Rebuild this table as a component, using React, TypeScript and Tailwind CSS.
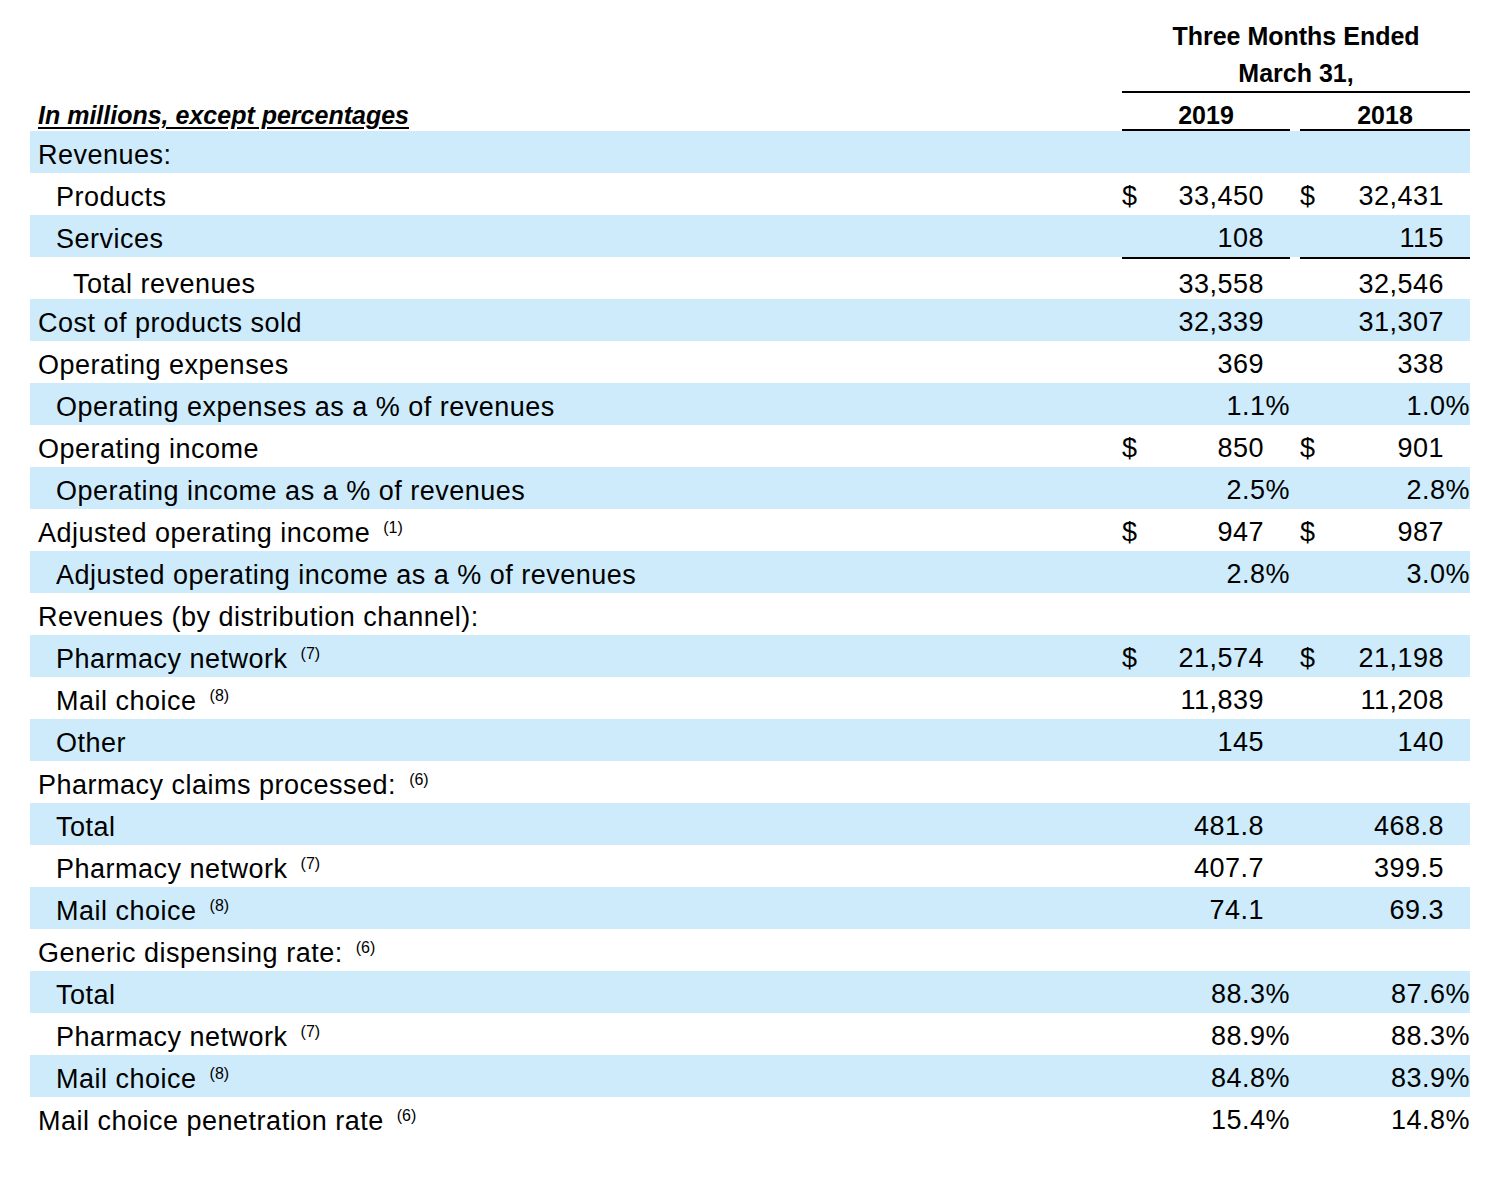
import React from 'react';

type Row = {
  label: string;
  note?: string;
  indent?: 0 | 1 | 2;
  a?: string;
  b?: string;
  dollar?: boolean;
  pct?: boolean;
  topRule?: boolean;
};

const rows: Row[] = [
  { label: 'Revenues:' },
  { label: 'Products', indent: 1, a: '33,450', b: '32,431', dollar: true },
  { label: 'Services', indent: 1, a: '108', b: '115' },
  { label: 'Total revenues', indent: 2, a: '33,558', b: '32,546', topRule: true },
  { label: 'Cost of products sold', a: '32,339', b: '31,307' },
  { label: 'Operating expenses', a: '369', b: '338' },
  { label: 'Operating expenses as a % of revenues', indent: 1, a: '1.1', b: '1.0', pct: true },
  { label: 'Operating income', a: '850', b: '901', dollar: true },
  { label: 'Operating income as a % of revenues', indent: 1, a: '2.5', b: '2.8', pct: true },
  { label: 'Adjusted operating income', note: '(1)', a: '947', b: '987', dollar: true },
  { label: 'Adjusted operating income as a % of revenues', indent: 1, a: '2.8', b: '3.0', pct: true },
  { label: 'Revenues (by distribution channel):' },
  { label: 'Pharmacy network', note: '(7)', indent: 1, a: '21,574', b: '21,198', dollar: true },
  { label: 'Mail choice', note: '(8)', indent: 1, a: '11,839', b: '11,208' },
  { label: 'Other', indent: 1, a: '145', b: '140' },
  { label: 'Pharmacy claims processed:', note: '(6)' },
  { label: 'Total', indent: 1, a: '481.8', b: '468.8' },
  { label: 'Pharmacy network', note: '(7)', indent: 1, a: '407.7', b: '399.5' },
  { label: 'Mail choice', note: '(8)', indent: 1, a: '74.1', b: '69.3' },
  { label: 'Generic dispensing rate:', note: '(6)' },
  { label: 'Total', indent: 1, a: '88.3', b: '87.6', pct: true },
  { label: 'Pharmacy network', note: '(7)', indent: 1, a: '88.9', b: '88.3', pct: true },
  { label: 'Mail choice', note: '(8)', indent: 1, a: '84.8', b: '83.9', pct: true },
  { label: 'Mail choice penetration rate', note: '(6)', a: '15.4', b: '14.8', pct: true },
];

const indentClass = ['pl-[8px]', 'pl-[26px]', 'pl-[43px]'];

const Cell = ({ value, dollar, pct, rule }: { value?: string; dollar?: boolean; pct?: boolean; rule?: boolean }) => (
  <div className={`flex h-full items-center justify-between ${rule ? 'border-t-2 border-black pt-[10px]' : 'pt-[3px]'}`}>
    <span>{dollar ? '$' : ''}</span>
    {value && (
      <span className={pct ? '' : 'pr-[26px]'}>
        {value}
        {pct ? '%' : ''}
      </span>
    )}
  </div>
);

const App: React.FC = () => {
  return (
    <div
      className="w-[1498px] h-[1180px] bg-white text-black pl-[30px] pr-[28px]"
      style={{ fontFamily: '"Liberation Sans", Arial, sans-serif' }}
    >
      {/* heading */}
      <div className="flex pt-[17px]">
        <div className="flex-1" />
        <div className="w-[348px] border-b-2 border-black pt-[1px] text-center text-[25px] font-bold leading-[37px] h-[76px]">
          <div>Three Months Ended</div>
          <div>March 31,</div>
        </div>
      </div>
      <div className="flex h-[38px] items-end text-[25px] font-bold">
        <div className="flex-1 pl-[8px] pb-[2px] italic underline underline-offset-[3px] leading-[28px]">
          In millions, except percentages
        </div>
        <div className="w-[168px] border-b-2 border-black pt-[8px] text-center leading-[28px]">2019</div>
        <div className="w-[180px] pl-[10px]">
          <div className="border-b-2 border-black pt-[8px] text-center leading-[28px]">2018</div>
        </div>
      </div>

      {/* body */}
      <div className="text-[27px] tracking-[0.5px]">
        {rows.map((r, i) => (
          <div
            key={i}
            className={`flex h-[42px] items-stretch leading-[42px] ${i % 2 === 0 ? 'bg-[#cdebfb]' : ''}`}
          >
            <div className={`flex-1 ${r.topRule ? 'pt-[6px]' : 'pt-[3px]'} ${indentClass[r.indent ?? 0]}`}>
              {r.label}
              {r.note && (
                <span className="relative top-[-9px] ml-[13px] text-[16px] tracking-normal">{r.note}</span>
              )}
            </div>
            <div className="w-[168px]">
              <Cell value={r.a} dollar={r.dollar} pct={r.pct} rule={r.topRule} />
            </div>
            <div className="w-[180px] pl-[10px]">
              <Cell value={r.b} dollar={r.dollar} pct={r.pct} rule={r.topRule} />
            </div>
          </div>
        ))}
      </div>
    </div>
  );
};

export default App;
